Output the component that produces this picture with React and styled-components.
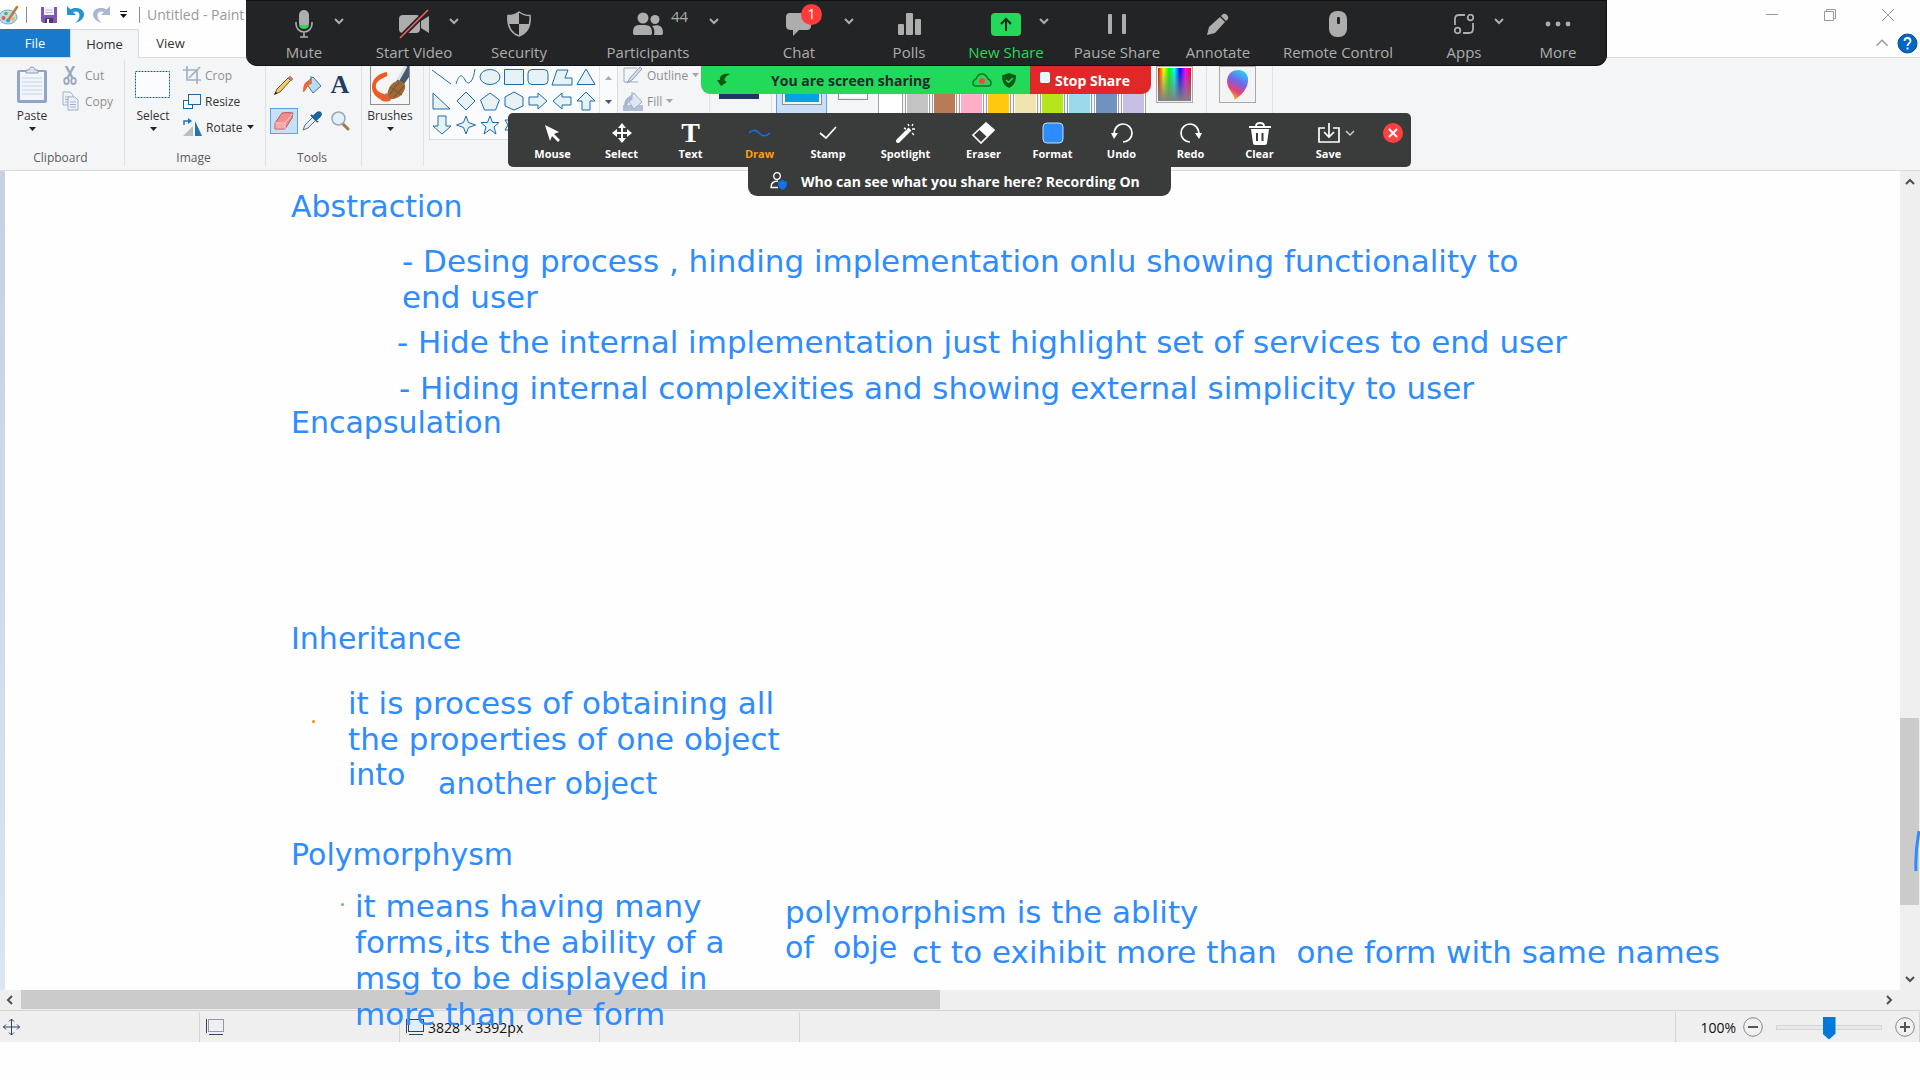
import React from "react";
import styled, { createGlobalStyle } from "styled-components";

const GlobalStyle = createGlobalStyle`
  * { box-sizing: border-box; }
  body { margin: 0; background: #fefefe; font-family: "Open Sans", "Noto Sans", sans-serif; }
  button { font-family: inherit; margin: 0; padding: 0; border: 0; background: none; color: inherit; }
  svg { display: block; flex: none; }
`;

const Desktop = styled.div`
  position: relative;
  display: flex;
  flex-direction: column;
  min-height: 100vh;
  padding-bottom: 38px;
  overflow: hidden;
  background: #fefefe;
`;

/* ---------- title bar and tabs ---------- */
const TitleBar = styled.header`
  display: flex;
  align-items: center;
  height: 29px;
  color: #999;
  font-size: 14px;
`;
const QuickButton = styled.button`
  display: flex;
  justify-content: center;
  width: ${(p) => p.$w || 26}px;
`;
const TitleRule = styled.span`
  width: 1px;
  height: 16px;
  margin-left: ${(p) => p.$gap || 0}px;
  background: #8d8d8d;
`;
const Title = styled.span`
  margin-left: 7px;
  flex: 1;
`;
const WindowButton = styled.button`
  display: flex;
  justify-content: center;
  align-items: center;
  width: 58px;
  height: 28px;
`;
const Tabs = styled.nav`
  display: flex;
  align-items: stretch;
  height: 29px;
  border-bottom: 1px solid #d9dadb;
  font-size: 13px;
  color: #333;
`;
const Tab = styled.button`
  width: ${(p) => p.$w}px;
  height: ${(p) => (p.$active ? 29 : 28)}px;
  font-size: 13px;
  color: ${(p) => (p.$file ? "#fff" : "#333")};
  background: ${(p) => (p.$file ? "#1979ca" : p.$active ? "#f4f5f7" : "none")};
  border: ${(p) => (p.$active ? "1px solid #d9dadb" : "0")};
  border-bottom: 0;
`;
const TabTools = styled.div`
  display: flex;
  align-items: center;
  gap: 8px;
  margin-left: auto;
  padding-right: 2px;
`;

/* ---------- ribbon ---------- */
const Ribbon = styled.div`
  display: flex;
  height: 113px;
  padding: 2px 0 4px;
  background: #f4f5f7;
  border-bottom: 1px solid #d9dadb;
  font-size: 12px;
  color: #333;
`;
const Group = styled.section`
  display: flex;
  flex-direction: column;
  width: ${(p) => p.$w}px;
  border-right: 1px solid #dfe1e3;
`;
const GroupBody = styled.div`
  display: flex;
  flex: 1;
  padding-left: ${(p) => p.$pad || 0}px;
  gap: ${(p) => p.$gap || 0}px;
`;
const Caption = styled.h2`
  margin: 0;
  height: 17px;
  line-height: 17px;
  padding-right: 3px;
  font-size: 12px;
  font-weight: 400;
  text-align: center;
  color: #5c5c5c;
`;
const BigButton = styled.button`
  display: flex;
  flex-direction: column;
  align-items: center;
  width: ${(p) => p.$w}px;
  padding-top: 5px;
  font-size: 12px;
  line-height: 16px;
  gap: 3px;
`;
const BigIcon = styled.span`
  display: flex;
  align-items: center;
  height: 40px;
`;
const SmallStack = styled.div`
  display: flex;
  flex-direction: column;
  padding-top: 2px;
`;
const SmallButton = styled.button`
  display: flex;
  align-items: center;
  gap: 4px;
  height: 26px;
  font-size: 12px;
  white-space: nowrap;
  color: ${(p) => (p.$off ? "#8f8f8f" : "#333")};
`;
const ToolGrid = styled.div`
  display: grid;
  grid-template-columns: repeat(3, 28px);
  grid-auto-rows: 26px;
  row-gap: 10px;
  padding-top: 12px;
`;
const ToolButton = styled.button`
  display: flex;
  align-items: center;
  justify-content: center;
  background: ${(p) => (p.$on ? "#c9dff5" : "none")};
  border: 1px solid ${(p) => (p.$on ? "#62a2e4" : "transparent")};
`;
const Gallery = styled.div`
  display: flex;
  width: 189px;
  height: 80px;
  background: #fafbfc;
  border: 1px solid #dadbdd;
`;
const ShapeGrid = styled.div`
  display: grid;
  grid-template-columns: repeat(7, 24px);
  grid-auto-rows: 24px;
  padding-top: 4px;
  width: 169px;
`;
const ShapeButton = styled.button`
  display: flex;
  align-items: center;
  justify-content: center;
`;
const GalleryScroll = styled.div`
  display: flex;
  flex: 1;
  flex-direction: column;
  align-items: center;
  gap: 20px;
  padding-top: 15px;
  border-left: 1px solid #e3e4e6;
`;
const ColorButton = styled.button`
  display: flex;
  justify-content: center;
  width: 51px;
  height: 94px;
  background: ${(p) => (p.$on ? "#c9dff5" : "none")};
  border: 1px solid ${(p) => (p.$on ? "#62a2e4" : "transparent")};
`;
const Swatch = styled.span`
  width: ${(p) => p.$s || 40}px;
  height: ${(p) => (p.$s ? 30 : 44)}px;
  margin-top: ${(p) => (p.$s ? 9 : 0)}px;
  border: 1px solid #8e8e8e;
  background: ${(p) => p.$c};
  box-shadow: inset 0 0 0 2px #f4f5f7;
`;
const Palette = styled.div`
  display: grid;
  grid-template-columns: repeat(10, 25px);
  grid-auto-rows: 25px;
  gap: 2px;
  padding-top: 4px;
`;
const PaletteCell = styled.button`
  background: ${(p) => p.$c};
  border: 1px solid ${(p) => (p.$c === "#99d9ea" ? "#62a2e4" : "#a0a0a0")};
  box-shadow: inset 0 0 0 1px #fff;
`;
const PictureButton = styled.button`
  display: flex;
  align-items: center;
  justify-content: center;
  width: 37px;
  height: 37px;
  margin-top: 6px;
  background: #f3f3f3;
  border: 1px solid #a9a9a9;
`;
const Spectrum = styled.span`
  width: 33px;
  height: 33px;
  background: linear-gradient(to bottom, transparent, #808080),
    linear-gradient(to right, #f00, #ff0, #0f0, #0ff, #00f, #f0f, #f00);
`;

/* ---------- drawing area ---------- */
const Workspace = styled.main`
  display: grid;
  flex: 1;
  grid-template-columns: 5px 1fr 20px;
  grid-template-rows: 1fr 20px;
  background: #efefef;
`;
const Edge = styled.div`
  background: linear-gradient(#c5d0e3, #dbe4f1);
`;
const Canvas = styled.div`
  background: #fefefe;
`;
const VScroll = styled.div`
  display: flex;
  flex-direction: column;
  align-items: center;
  justify-content: space-between;
  padding: 6px 0;
`;
const VTrack = styled.div`
  flex: 1;
  width: 100%;
  display: grid;
  grid-template-rows: 531fr 187fr 69fr;
`;
const VThumb = styled.div`
  grid-row: 2;
  margin-right: 1px;
  background: #cbcbcb;
`;
const HScroll = styled.div`
  grid-column: 1 / 4;
  display: flex;
  align-items: center;
  padding: 0 26px 0 5px;
`;
const HTrack = styled.div`
  flex: 1;
  height: 100%;
  margin: 0 0 0 6px;
  display: grid;
  grid-template-columns: 919fr 943fr;
`;
const HThumb = styled.div`
  margin-bottom: 1px;
  background: #cbcbcb;
`;

/* ---------- status bar ---------- */
const StatusBar = styled.footer`
  display: flex;
  height: 32px;
  padding-top: 1px;
  background: #efefef;
  border-top: 1px solid #d4d4d4;
  font-size: 14px;
  color: #111;
`;
const StatusCell = styled.div`
  display: flex;
  align-items: center;
  gap: 4px;
  width: 200px;
  padding-left: ${(p) => p.$pad || 5}px;
  border-right: 1px solid #d6d6d6;
`;
const ZoomCell = styled.div`
  display: flex;
  align-items: center;
  margin-left: auto;
  padding-right: 4px;
  padding-left: 24px;
  border-left: 1px solid #d6d6d6;
  border-right: 1px solid #d6d6d6;
  gap: 7px;
`;
const Slider = styled.input`
  appearance: none;
  width: 106px;
  height: 24px;
  margin: 0 6px;
  background: none;
  &::-webkit-slider-runnable-track {
    height: 5px;
    background: #e6eaea;
    border: 1px solid #d2d4d5;
  }
  &::-webkit-slider-thumb {
    appearance: none;
    width: 13px;
    height: 23px;
    margin-top: -9px;
    background: #0078d7;
    clip-path: polygon(0 0, 100% 0, 100% 75%, 50% 100%, 0 75%);
  }
`;

/* ---------- annotations over the desktop ---------- */
const Note = styled.p`
  position: absolute;
  left: ${(p) => p.$x}px;
  top: ${(p) => p.$y}px;
  margin: 0;
  font-family: "DejaVu Sans", sans-serif;
  font-size: ${(p) => (p.$long ? 31 : 30)}px;
  line-height: 36px;
  white-space: pre;
  color: #2d8cff;
`;
const Dot = styled.span`
  position: absolute;
  left: ${(p) => p.$x}px;
  top: ${(p) => p.$y}px;
  width: 3px;
  height: 3px;
  border-radius: 50%;
  background: ${(p) => p.$c};
`;
const PenStroke = styled.svg`
  position: absolute;
  right: 0;
  top: 828px;
`;

/* ---------- meeting toolbars ---------- */
const MeetingBar = styled.div`
  position: absolute;
  left: 246px;
  top: 0;
  display: flex;
  height: 66px;
  padding-left: 12px;
  background: #232425;
  border: 1px solid #111213;
  border-left: 0;
  border-radius: 0 0 11px 11px;
  color: #adadad;
`;
const MeetingItem = styled.button`
  position: relative;
  display: flex;
  flex-direction: column;
  align-items: center;
  width: ${(p) => p.$w}px;
  padding-top: 9px;
  font-size: 15px;
  line-height: 20px;
  white-space: nowrap;
  color: ${(p) => (p.$green ? "#23d959" : "#adadad")};
`;
const MeetingIcon = styled.span`
  display: flex;
  align-items: center;
  height: 28px;
  margin-bottom: 4px;
`;
const Drop = styled.span`
  position: absolute;
  top: 15px;
  left: calc(50% + ${(p) => p.$dx}px);
`;
const Count = styled.span`
  position: absolute;
  top: 5px;
  left: calc(50% + 23px);
`;
const Badge = styled.span`
  position: absolute;
  top: 3px;
  left: calc(50% + 2px);
  width: 21px;
  height: 21px;
  border-radius: 50%;
  background: #ff3b3b;
  color: #fff;
  font-size: 14px;
  line-height: 20px;
  text-align: center;
`;
const ShareBar = styled.div`
  position: absolute;
  left: 701px;
  top: 66px;
  display: flex;
  height: 28px;
  border-radius: 0 0 9px 9px;
  overflow: hidden;
  font-size: 14px;
  font-weight: 700;
`;
const ShareStatus = styled.div`
  display: flex;
  align-items: center;
  width: 329px;
  padding: 0 14px 0 16px;
  gap: 10px;
  background: #23d959;
  color: #222831;
`;
const ShareText = styled.span`
  flex: 1;
  padding-left: 30px;
`;
const StopButton = styled.button`
  display: flex;
  align-items: center;
  gap: 5px;
  width: 121px;
  padding-left: 10px;
  background: #e02828;
  color: #fff;
  font-size: 14px;
  font-weight: 700;
  white-space: nowrap;
`;
const StopSquare = styled.span`
  width: 10px;
  height: 11px;
  margin-bottom: 5px;
  border-radius: 2px;
  background: #e4fbff;
`;
const DrawBar = styled.div`
  position: absolute;
  left: 508px;
  top: 113px;
  display: flex;
  width: 903px;
  height: 54px;
  padding-left: 10px;
  border-radius: 5px;
  background: #3a3b3b;
`;
const DrawItem = styled.button`
  position: relative;
  display: flex;
  flex-direction: column;
  align-items: center;
  width: ${(p) => p.$w}px;
  padding-top: 8px;
  font-size: 11px;
  font-weight: 700;
  line-height: 16px;
  color: ${(p) => (p.$on ? "#ff9f0a" : "#fff")};
`;
const DrawIcon = styled.span`
  display: flex;
  align-items: center;
  height: 24px;
  margin-bottom: 1px;
`;
const CloseButton = styled.button`
  align-self: flex-start;
  margin: 10px 0 0 20px;
`;
const AudienceTab = styled.div`
  position: absolute;
  left: 748px;
  top: 166px;
  display: flex;
  align-items: center;
  gap: 14px;
  width: 423px;
  height: 30px;
  padding-left: 22px;
  border-radius: 0 0 9px 9px;
  background: #3a3b3b;
  color: #fff;
  font-size: 14px;
  font-weight: 700;
  white-space: nowrap;
`;

/* ---------- drawings ---------- */
const Caret = ({ c = "#222" }) => (
  <svg width="7" height="4" viewBox="0 0 7 4"><path d="M0 0h7L3.500 4z" fill={c} /></svg>
);
const Chevron = ({ dir = "down", c = "#505050", s = 10, w = 2 }) => {
  const d = { down: "M1 3l4 4 4-4", up: "M1 7l4-4 4 4", left: "M7 1L3 5l4 4", right: "M3 1l4 4-4 4" }[dir];
  return <svg width={s} height={s} viewBox="0 0 10 10" fill="none" stroke={c} strokeWidth={w}><path d={d} /></svg>;
};
const PaintLogo = () => (
  <svg width="21" height="20" viewBox="0 0 21 20">
    <ellipse cx="8" cy="12" rx="9" ry="7" fill="#b9dcf0" stroke="#74a9c9" />
    <circle cx="3.500" cy="13" r="2" fill="#e65b45" /><circle cx="6" cy="8.500" r="1.800" fill="#5fb04c" />
    <circle cx="8" cy="15.500" r="2" fill="#35a1d8" /><circle cx="13" cy="14" r="1.800" fill="#f2b83a" />
    <path d="M9 14L17 2" stroke="#c07c35" strokeWidth="2.600" strokeLinecap="round" />
  </svg>
);
const SaveDisk = () => (
  <svg width="16" height="16" viewBox="0 0 16 16">
    <path d="M0 0h16v16H2l-2-2z" fill="#8156b4" /><path d="M3 0h10v8H3z" fill="#f4f1f8" />
    <path d="M4.500 3h7M4.500 5.500h7" stroke="#c2b5d4" /><path d="M4 11h8v5H4z" fill="#4c3b60" /><path d="M6 12h2v4H6z" fill="#f3f3f3" />
  </svg>
);
const UNDO_PATH = "M0 0v9h9L6 6c4-1.500 6.500 0 6.500 3.500 0 3-1.500 5-4.500 7.500 6-1.500 9-5 9-9C16.500 2.500 9 .5 3.500 3.500z";
const CurvedArrow = ({ flip, c }) => (
  <svg width="17" height="18" viewBox="0 0 17 18">
    <path d={UNDO_PATH} fill={c} transform={flip ? "translate(17 0) scale(-1 1)" : undefined} />
  </svg>
);
const PasteIcon = () => (
  <svg width="32" height="38" viewBox="0 0 32 38">
    <rect x="1" y="4" width="30" height="33" rx="2" fill="#91a5c8" />
    <rect x="4" y="6" width="24" height="28" fill="#f2f6fc" />
    <path d="M6 12h20M6 16h20M6 20h20M6 24h20M6 28h20" stroke="#c3d0e4" />
    <path d="M10 7V4h3c0-4 6-4 6 0h3v3z" fill="#dbe3ef" stroke="#8c9cb8" />
  </svg>
);
const CutIcon = () => (
  <svg width="14" height="19" viewBox="0 0 14 19" fill="none" stroke="#9aa8c2">
    <path d="M3 0l6.500 12M11 0L4.500 12" strokeWidth="2.400" /><ellipse cx="3.500" cy="15" rx="2.300" ry="3" strokeWidth="1.800" /><ellipse cx="10.500" cy="15" rx="2.300" ry="3" strokeWidth="1.800" />
  </svg>
);
const CopyIcon = () => (
  <svg width="17" height="20" viewBox="0 0 17 20" fill="#eef2f9" stroke="#9fb0cd">
    <path d="M1 1h7l3 3v10H1z" /><path d="M3 6h5M3 8.500h5M3 11h5" />
    <path d="M6 6h7l3 3v10H6z" /><path d="M8 11h6M8 13.500h6M8 16h6" />
  </svg>
);
const SelectIcon = () => (
  <svg width="36" height="28" viewBox="0 0 36 28"><rect x=".5" y=".5" width="34" height="26" fill="#fafcfe" stroke="#1463a5" strokeDasharray="2 1" /></svg>
);
const CropIcon = () => (
  <svg width="18" height="18" viewBox="0 0 18 18" fill="none" stroke="#a3afc4" strokeWidth="1.700">
    <path d="M4 0v14h14M0 4h14v14M6 12L17 1" />
  </svg>
);
const ResizeIcon = () => (
  <svg width="18" height="17" viewBox="0 0 18 17" fill="#fff" stroke="#1b67a6">
    <rect x=".5" y="7.500" width="9" height="8" /><rect x="5.500" y="1.500" width="12" height="10" fill="#eef8fb" />
  </svg>
);
const RotateIcon = () => (
  <svg width="19" height="19" viewBox="0 0 19 19">
    <path d="M0 18h10V8z" fill="#bdbdbd" /><path d="M12 18h7L12 3z" fill="#2275b5" />
    <path d="M1 7V3h5" fill="none" stroke="#1e74c8" strokeWidth="1.500" /><path d="M5 0l4 3-4 3z" fill="#1e74c8" />
  </svg>
);
const PencilTool = () => (
  <svg width="20" height="20" viewBox="0 0 20 20">
    <path d="M1 19l2-5L14 3l2.500 2.500L6 17z" fill="#f1cc6d" stroke="#6b5530" /><path d="M14 3l2-2 3 3-2 2z" fill="#d9747c" stroke="#7c6a55" strokeWidth=".6" /><path d="M0 20l1.500-3.500L3.500 18.500z" fill="#222" />
  </svg>
);
const FillTool = ({ grey }) => (
  <svg width="20" height="19" viewBox="0 0 20 19">
    {grey && <path d="M0 13h20v6H0z" fill="#b0bfd7" />}
    <path d="M4 7L11 1l8 9-8 7z" fill={grey ? "#dfe6f1" : "#b9dcf2"} stroke={grey ? "#9fadc6" : "#44718f"} />
    <path d="M9 0v8" stroke={grey ? "#9fadc6" : "#54677a"} /><path d="M9 4C3 5 1 8 1 16c3 0 3-6 8-8z" fill={grey ? "#a8b7d0" : "#ec6a32"} />
  </svg>
);
const LetterA = styled.span`
  font-family: "Liberation Serif", serif;
  font-size: 26px;
  font-weight: 700;
  line-height: 24px;
  color: #1f3b66;
`;
const EraserTool = () => (
  <svg width="20" height="18" viewBox="0 0 20 18"><path d="M1 11L8 1q5-1 11 0l-1 5-7 11H1z" fill="#f08e8e" stroke="#b5585b" /><path d="M1.500 11.500h9.500v5H1.500z" fill="#f7a9a5" /><path d="M1 11h10v6M11 11l7.500-9" fill="none" stroke="#f9d3d0" /></svg>
);
const Dropper = () => (
  <svg width="20" height="20" viewBox="0 0 20 20"><path d="M1 19l2-5 8-8 3 3-8 8z" fill="#e2edf4" stroke="#5e7180" /><path d="M9 4l7 7M11 6l4-4c3-2 5 1 3 3l-4 4z" stroke="#1c5d9c" strokeWidth="2" fill="#1c6cb1" /></svg>
);
const Magnifier = () => (
  <svg width="19" height="20" viewBox="0 0 19 20"><path d="M11 12l6 6" stroke="#a77843" strokeWidth="3" strokeLinecap="round" /><circle cx="7.500" cy="7.500" r="6.500" fill="#e1f1fb" stroke="#9ba8b2" strokeWidth="1.500" /></svg>
);
const BrushPicture = () => (
  <svg width="40" height="40" viewBox="0 0 40 40">
    <rect x=".5" y=".5" width="39" height="39" fill="#f4f5f5" stroke="#8b9094" />
    <path d="M16 7C8 9 2 14 2 22c0 6 4 11 12 14l3-6C9 28 5 25 6 20c1-5 6-6 11-9 1-2 0-4-1-4z" fill="#ee5a24" />
    <path d="M26 17L35 1h4v11l-7 10z" fill="#45586d" /><path d="M28 15l8-14" stroke="#dbe3e9" strokeWidth="3" />
    <path d="M17 31c1-9 5-14 11-15 6 0 9 4 6 10-3 6-9 9-17 8z" fill="#9a6a3a" /><path d="M20 29l9-12M24 32l10-11M20 22l12 8" stroke="#7b4f24" /><path d="M11 35c3-2 3-6 6-7l4 7c-3 2-7 2-10 0z" fill="#e06030" />
  </svg>
);
const SHAPES = [
  ["line", "M2 3l19 14"], ["curve", "M2 17c3-10 6-10 9-4s8 3 10-11"],
  ["oval", "M2 10a10 7.500 0 1 0 20 0a10 7.500 0 1 0-20 0z"], ["rectangle", "M2.500 2.500h19v15h-19z"],
  ["rounded rectangle", "M6 2.500h12q4 0 4 4v7q0 4-4 4H6q-4 0-4-4v-7q0-4 4-4z"],
  ["polygon", "M7 3h11l-3 8h7v7H2z"], ["triangle", "M12 2l9 15.500H3z"],
  ["right triangle", "M3 2v16h17z"], ["diamond", "M12 1l9 9-9 9-9-9z"], ["pentagon", "M12 2l9.500 7-4 10h-11l-4-10z"],
  ["hexagon", "M12 1l9 5v9l-9 4-9-4V6z"], ["right arrow", "M3 6h9V2l9 8-9 8v-4H3z"], ["left arrow", "M21 6h-9V2l-9 8 9 8v-4h9z"],
  ["up arrow", "M12 1l9 9h-5v9H8v-9H3z"], ["down arrow", "M12 19l9-8h-5V1H8v10H3z"],
  ["four-point star", "M12 1l2.500 6.500 7 2.500-7 2.500L12 19l-2.500-6.500-7-2.500 7-2.500z"],
  ["five-point star", "M12 1l2.500 6.500H21l-5 4.500 2 7-6-4.500L6 19l2-7-5-4.500h6.500z"],
  ["six-point star", "M12 1l3 4h6l-3 5 3 5h-6l-3 4-3-4H3l3-5-3-5h6z"],
];
const Shape = ({ d, open }) => (
  <svg width="24" height="20" viewBox="0 0 24 20" fill={open ? "none" : "#e6f2f6"} stroke="#1e6bab"><path d={d} /></svg>
);
const OutlineIcon = () => (
  <svg width="20" height="18" viewBox="0 0 20 18"><path d="M14 2H1v14h14" fill="none" stroke="#9cabc6" /><path d="M4 17l3-5L17 1l2 2L9 14z" fill="#d5deeb" stroke="#8b9cb9" /></svg>
);
const Paint3D = () => (
  <svg width="24" height="32" viewBox="0 0 24 32">
    <defs><linearGradient id="drop" x1=".7" y1="0" x2=".3" y2="1"><stop offset="0" stopColor="#25d3f3" /><stop offset=".4" stopColor="#7265e8" /><stop offset=".7" stopColor="#e8407a" /><stop offset="1" stopColor="#ffc400" /></linearGradient></defs>
    <path d="M12 1c7 0 11 5 10 12-1 7-7 14-14 18 2-5-6-9-7-18C1 6 5 1 12 1z" fill="url(#drop)" />
  </svg>
);
const MoveIcon = () => (
  <svg width="17" height="18" viewBox="0 0 17 18" fill="none" stroke="#284468"><path d="M8.500 1v16M0 9h17M6 3.500L8.500 1 11 3.500M6 14.500L8.500 17l2.500-2.500M3 6.500L.500 9 3 11.500M14 6.500L16.500 9 14 11.500" /></svg>
);
const BoxIcon = ({ solid }) => (
  <svg width="19" height="18" viewBox="0 0 19 18" stroke="#284468"><rect x="3.500" y="1.500" width="15" height="12" fill={solid ? "#dff0f7" : "none"} strokeDasharray={solid ? undefined : "1 1"} /><path d="M1.500 1v14M4 16.500h14" /></svg>
);
const ZoomKnob = ({ plus }) => (
  <svg width="20" height="20" viewBox="0 0 20 20" stroke="#555"><circle cx="10" cy="10" r="9.300" fill="#f1f1f1" stroke="#858585" /><path d={plus ? "M5 10h10M10 5v10" : "M5 10h10"} strokeWidth="2" /></svg>
);
const MicIcon = () => (
  <svg width="18" height="28" viewBox="0 0 18 28" fill="none" stroke="#adadad" strokeWidth="1.600">
    <rect x="4" y="0" width="10" height="18" rx="5" fill="#adadad" stroke="none" /><path d="M4 15h10a5 4 0 0 1-10 0z" fill="#23d959" stroke="none" />
    <path d="M1 12v2a8 8 0 0 0 16 0v-2M9 22v5M5 27h8" />
  </svg>
);
const VideoOffIcon = () => (
  <svg width="31" height="30" viewBox="0 0 31 30"><rect x="0" y="6" width="21" height="18" rx="4" fill="#adadad" /><path d="M22 12l8-5v17l-8-5z" fill="#adadad" /><path d="M1 29L29 1" stroke="#232425" strokeWidth="5" /><path d="M1 29L29 1" stroke="#ff5d5d" strokeWidth="1.600" /></svg>
);
const SecurityIcon = () => (
  <svg width="24" height="26" viewBox="0 0 24 26"><path d="M12 1c4 3 7 3.500 11 3.500C24 15 20 22 12 25 4 22 0 15 1 4.500 5 4.500 8 4 12 1z" fill="#232425" stroke="#adadad" strokeWidth="1.500" /><path d="M12 1v12H1.500C1 10 1 7 1 4.500 5 4.500 8 4 12 1zM12 13h10.500c-1 5-4 9.500-10.500 12z" fill="#adadad" /></svg>
);
const PeopleIcon = () => (
  <svg width="31" height="24" viewBox="0 0 31 24" fill="#adadad"><circle cx="10" cy="6" r="5.500" /><circle cx="22" cy="7.500" r="4.500" /><path d="M0 21c0-9 5-8 10-8s9 0 9 8c0 1.500-1 2-2 2H2c-1 0-2-.5-2-2zM19 14c6-1.500 11-1 11 7 0 1.500-1 2-2 2h-7c1-4 0-7-2-9z" /></svg>
);
const ChatIcon = () => (
  <svg width="26" height="24" viewBox="0 0 26 24" fill="#adadad"><path d="M4 1h17q4 0 4 4v9q0 4-4 4h-8l-6 6v-6H5q-5 0-5-4V5q0-4 4-4z" /></svg>
);
const PollsIcon = () => (
  <svg width="23" height="24" viewBox="0 0 23 24" fill="#adadad"><rect y="12" width="6" height="11" rx="1" /><rect x="8" y="1" width="7" height="22" rx="1" /><rect x="17" y="7" width="6" height="16" rx="1" /></svg>
);
const ShareIcon = () => (
  <svg width="30" height="23" viewBox="0 0 30 23"><rect width="30" height="23" rx="4" fill="#23d959" /><path d="M15 18V6M10 11l5-5 5 5" fill="none" stroke="#232425" strokeWidth="2" /></svg>
);
const PauseIcon = () => (
  <svg width="18" height="20" viewBox="0 0 18 20" fill="#adadad"><rect width="4" height="20" rx="1" /><rect x="14" width="4" height="20" rx="1" /></svg>
);
const AnnotateIcon = () => (
  <svg width="22" height="22" viewBox="0 0 22 22" fill="#adadad"><path d="M0 22l2-8L13 4l5 5L8 20zM14 3l2-2q2-1 4 1t1 4l-2 2z" /></svg>
);
const MouseIcon = () => (
  <svg width="18" height="26" viewBox="0 0 18 26"><rect width="18" height="26" rx="8" fill="#adadad" /><rect x="8" y="6" width="3" height="7" rx="1" fill="#232425" /></svg>
);
const AppsIcon = () => (
  <svg width="20" height="20" viewBox="0 0 20 20" fill="none" stroke="#adadad" strokeWidth="1.800"><path d="M11 1H5Q1 1 1 5v6M9 19h6q4 0 4-4V9" /><circle cx="16.500" cy="3.500" r="2.800" /><circle cx="3.500" cy="16.500" r="2.800" /></svg>
);
const DotsIcon = () => (
  <svg width="26" height="6" viewBox="0 0 26 6" fill="#adadad"><circle cx="3" cy="3" r="2.400" /><circle cx="13" cy="3" r="2.400" /><circle cx="23" cy="3" r="2.400" /></svg>
);
const white = { fill: "none", stroke: "#fff", strokeWidth: 2 };
const DRAW_ICONS = {
  Mouse: <svg width="16" height="17" viewBox="0 0 16 17" fill="#fff"><path d="M0 0l14 7-5 2 6 6-2 2-6-6-2 5z" /></svg>,
  Select: <svg width="20" height="20" viewBox="0 0 20 20"><path d="M10 3v14M3 10h14" stroke="#fff" strokeWidth="2" /><path d="M10 0l4 5H6zM10 20l4-5H6zM0 10l5-4v8zM20 10l-5-4v8z" fill="#fff" /></svg>,
  Draw: <svg width="23" height="10" viewBox="0 0 23 10" fill="none" stroke="#0e72ed" strokeWidth="1.600"><path d="M1 5c4-4 7-3 10 0s7 4 11 0" /></svg>,
  Stamp: <svg width="18" height="14" viewBox="0 0 18 14" {...white} strokeWidth="1.700"><path d="M1 7l6 5L17 1" /></svg>,
  Spotlight: <svg width="20" height="20" viewBox="0 0 20 20" {...white}><path d="M2 18L11 9" strokeWidth="4" strokeLinecap="round" /><path d="M12 8l2-2" strokeWidth="4" /><path d="M8 5l2 1M12 1l1 2M17 1l-1 2M19 6h-2M18 12l-2-2M16 6l1 0" strokeWidth="1.400" /></svg>,
  Eraser: <svg width="23" height="22" viewBox="0 0 23 22"><path d="M1 13L14 1l8 7L9 21z" fill="#3a3b3b" stroke="#fff" strokeWidth="1.600" /><path d="M7 7.500L14 1l8 7-7 7z" fill="#fff" /></svg>,
  Format: <svg width="22" height="22" viewBox="0 0 22 22"><rect x="1" y="1" width="20" height="20" rx="4" fill="#2d8cff" stroke="#c5dcf5" /></svg>,
  Undo: <svg width="22" height="20" viewBox="0 0 22 20"><path d="M3 12C3 5 7 1 12 1s9 4 9 9-4 9-9 9" fill="none" stroke="#fff" strokeWidth="1.700" /><path d="M0 10h7l-4 6z" fill="#fff" /></svg>,
  Redo: <svg width="22" height="20" viewBox="0 0 22 20"><path d="M19 12c0-7-4-11-9-11s-9 4-9 9 4 9 9 9" fill="none" stroke="#fff" strokeWidth="1.700" /><path d="M22 10h-7l4 6z" fill="#fff" /></svg>,
  Clear: <svg width="22" height="23" viewBox="0 0 22 23"><path d="M0 5h22M7 4q0-3 4-3t4 3" fill="none" stroke="#fff" strokeWidth="1.800" /><path d="M2 7h18l-2 14q0 2-2 2H6q-2 0-2-2z" fill="#fff" /><path d="M8 11v8M13.500 11v8" stroke="#3a3b3b" strokeWidth="2" /></svg>,
  Save: <svg width="22" height="20" viewBox="0 0 22 20" {...white} strokeWidth="1.700"><path d="M7 5H1v14h20V5h-6M11 0v14M6 9l5 5 5-5" /></svg>,
};
const LetterT = styled.span`
  font-family: "Liberation Serif", serif;
  font-size: 28px;
  font-weight: 700;
`;

const MEETING = [
  ["Mute", 92, <MicIcon />, 30], ["Start Video", 128, <VideoOffIcon />, 35], ["Security", 82, <SecurityIcon />],
  ["Participants", 176, <PeopleIcon />, 61], ["Chat", 126, <ChatIcon />, 45], ["Polls", 94, <PollsIcon />],
  ["New Share", 100, <ShareIcon />, 33], ["Pause Share", 122, <PauseIcon />], ["Annotate", 80, <AnnotateIcon />],
  ["Remote Control", 160, <MouseIcon />], ["Apps", 92, <AppsIcon />, 30], ["More", 96, <DotsIcon />],
];
const DRAW = [
  ["Mouse", 69], ["Select", 69], ["Text", 69], ["Draw", 69], ["Stamp", 68], ["Spotlight", 87],
  ["Eraser", 69], ["Format", 69], ["Undo", 69], ["Redo", 69], ["Clear", 69], ["Save", 69],
];
const PALETTE = [
  "#000", "#7f7f7f", "#880015", "#ed1c24", "#ff7f27", "#fff200", "#22b14c", "#00a2e8", "#3f48cc", "#a349a4",
  "#fff", "#c3c3c3", "#b97a57", "#ffaec9", "#ffc90e", "#efe4b0", "#b5e61d", "#99d9ea", "#7092be", "#c8bfe7",
  "#f8f8f8", "#f8f8f8", "#f8f8f8", "#f8f8f8", "#f8f8f8", "#f8f8f8", "#f8f8f8", "#f8f8f8", "#f8f8f8", "#f8f8f8",
];
const HEADINGS = [
  [291, 189, "Abstraction"],
  [291, 405, "Encapsulation"],
  [291, 621, "Inheritance"],
  [291, 837, "Polymorphysm"],
  [348, 757, "into"],
  [438, 766, "another object"],
  [785, 930, "of  obje"],
];
const SENTENCES = [
  [402, 243, "- Desing process , hinding implementation onlu showing functionality to\nend user"],
  [397, 324, "- Hide the internal implementation just highlight set of services to end user"],
  [399, 370, "- Hiding internal complexities and showing external simplicity to user"],
  [348, 685, "it is process of obtaining all\nthe properties of one object"],
  [355, 888, "it means having many\nforms,its the ability of a\nmsg to be displayed in\nmore than one form"],
  [785, 894, "polymorphism is the ablity"],
  [912, 934, "ct to exihibit more than  one form with same names"],
];

export default function App() {
  return (
    <Desktop>
      <GlobalStyle />
      <TitleBar>
        <PaintLogo />
        <QuickButton as="span" $w={10}><TitleRule /></QuickButton>
        <QuickButton $w={36} aria-label="Save"><SaveDisk /></QuickButton>
        <QuickButton $w={16} aria-label="Undo"><CurvedArrow c="#2792d3" /></QuickButton>
        <QuickButton $w={36} aria-label="Redo"><CurvedArrow flip c="#a9b8d0" /></QuickButton>
        <QuickButton $w={8} aria-label="Customize">
          <svg width="7" height="7" viewBox="0 0 7 7"><path d="M0 .5h7" stroke="#111" /><path d="M0 3h7L3.500 7z" fill="#111" /></svg>
        </QuickButton>
        <TitleRule $gap={12} />
        <Title>Untitled - Paint</Title>
        <WindowButton aria-label="Minimize"><svg width="12" height="12" viewBox="0 0 12 12" stroke="#999"><path d="M0 5.500h12" /></svg></WindowButton>
        <WindowButton aria-label="Restore"><svg width="12" height="12" viewBox="0 0 12 12" fill="none" stroke="#999"><path d="M.5 2.500h9v9h-9zM2.500 2V.5h9v9H10" /></svg></WindowButton>
        <WindowButton aria-label="Close"><svg width="12" height="12" viewBox="0 0 12 12" stroke="#999"><path d="M0 0l12 12M12 0L0 12" /></svg></WindowButton>
        <QuickButton as="span" $w={3} />
      </TitleBar>
      <Tabs>
        <Tab $w={70} $file>File</Tab>
        <Tab $w={69} $active>Home</Tab>
        <Tab $w={63}>View</Tab>
        <TabTools>
          <button aria-label="Collapse ribbon"><Chevron dir="up" c="#999" s={14} w={1} /></button>
          <button aria-label="Help">
            <svg width="21" height="21" viewBox="0 0 21 21"><circle cx="10.500" cy="10.500" r="9.500" fill="#0067c5" stroke="#0a4d8c" /><path d="M7.500 8c0-4 6-4 6 0 0 2-3 2.500-3 5M10.500 14.500v2" fill="none" stroke="#fff" strokeWidth="1.800" /></svg>
          </button>
        </TabTools>
      </Tabs>
      <Ribbon>
        <Group $w={125}>
          <GroupBody $pad={8} $gap={3}>
            <BigButton $w={48}><BigIcon><PasteIcon /></BigIcon>Paste<Caret /></BigButton>
            <SmallStack>
              <SmallButton $off><QuickButton as="span" $w={22}><CutIcon /></QuickButton>Cut</SmallButton>
              <SmallButton $off><QuickButton as="span" $w={22}><CopyIcon /></QuickButton>Copy</SmallButton>
            </SmallStack>
          </GroupBody>
          <Caption>Clipboard</Caption>
        </Group>
        <Group $w={141}>
          <GroupBody $pad={3} $gap={5}>
            <BigButton $w={50}><BigIcon><SelectIcon /></BigIcon>Select<Caret /></BigButton>
            <SmallStack>
              <SmallButton $off><CropIcon />Crop</SmallButton>
              <SmallButton><ResizeIcon />Resize</SmallButton>
              <SmallButton><RotateIcon />Rotate<Caret /></SmallButton>
            </SmallStack>
          </GroupBody>
          <Caption>Image</Caption>
        </Group>
        <Group $w={96}>
          <GroupBody $pad={4}>
            <ToolGrid>
              <ToolButton aria-label="Pencil"><PencilTool /></ToolButton>
              <ToolButton aria-label="Fill with color"><FillTool /></ToolButton>
              <ToolButton><LetterA>A</LetterA></ToolButton>
              <ToolButton $on aria-label="Eraser"><EraserTool /></ToolButton>
              <ToolButton aria-label="Color picker"><Dropper /></ToolButton>
              <ToolButton aria-label="Magnifier"><Magnifier /></ToolButton>
            </ToolGrid>
          </GroupBody>
          <Caption>Tools</Caption>
        </Group>
        <Group $w={62}>
          <GroupBody $pad={2}>
            <BigButton $w={52}><BigIcon><BrushPicture /></BigIcon>Brushes<Caret /></BigButton>
          </GroupBody>
        </Group>
        <Group $w={286}>
          <GroupBody $pad={5} $gap={5}>
            <Gallery>
              <ShapeGrid>
                {SHAPES.map(([name, d], i) => (
                  <ShapeButton key={name} aria-label={name}><Shape d={d} open={i < 2} /></ShapeButton>
                ))}
              </ShapeGrid>
              <GalleryScroll>
                <svg width="7" height="4" viewBox="0 0 7 4"><path d="M0 4h7L3.500 0z" fill="#a9adb3" /></svg>
                <Caret c="#3d5878" />
              </GalleryScroll>
            </Gallery>
            <SmallStack>
              <SmallButton $off><OutlineIcon />Outline<Caret c="#a5a5a5" /></SmallButton>
              <SmallButton $off><FillTool grey />Fill<Caret c="#a5a5a5" /></SmallButton>
            </SmallStack>
          </GroupBody>
        </Group>
        <Group $w={62}>
          <GroupBody $pad={8}>
            <svg width="42" height="44" viewBox="0 0 42 44"><path d="M1 8h40M1 16h40M1 26h40" stroke="#1f3763" strokeWidth="3" /><path d="M1 33h40v6H1z" fill="#1f3763" /></svg>
          </GroupBody>
        </Group>
        <Group $w={435}>
          <GroupBody $pad={4}>
            <ColorButton $on aria-label="Color 1"><Swatch $c="#00a2e8" /></ColorButton>
            <ColorButton aria-label="Color 2"><Swatch $s={30} $c="#fff" /></ColorButton>
            <Palette>
              {PALETTE.map((c, i) => <PaletteCell key={i} $c={c} aria-label={"Color " + c} />)}
            </Palette>
            <QuickButton as="span" $w={10} />
            <PictureButton aria-label="Edit colors"><Spectrum /></PictureButton>
          </GroupBody>
        </Group>
        <Group $w={66}>
          <GroupBody $pad={12}>
            <PictureButton aria-label="Edit with Paint 3D"><Paint3D /></PictureButton>
          </GroupBody>
        </Group>
      </Ribbon>
      <Workspace>
        <Edge />
        <Canvas />
        <VScroll>
          <Chevron dir="up" />
          <VTrack><VThumb /></VTrack>
          <Chevron dir="down" />
        </VScroll>
        <HScroll>
          <Chevron dir="left" />
          <HTrack><HThumb /></HTrack>
          <Chevron dir="right" />
        </HScroll>
      </Workspace>
      <StatusBar>
        <StatusCell $pad={3}><MoveIcon /></StatusCell>
        <StatusCell><BoxIcon /></StatusCell>
        <StatusCell><BoxIcon solid />3828 × 3392px</StatusCell>
        <StatusCell />
        <ZoomCell>
          <label htmlFor="zoom">100%</label>
          <button aria-label="Zoom out"><ZoomKnob /></button>
          <Slider id="zoom" type="range" min="0" max="100" defaultValue="50" />
          <button aria-label="Zoom in"><ZoomKnob plus /></button>
        </ZoomCell>
      </StatusBar>

      {HEADINGS.map(([x, y, text]) => <Note key={y} $x={x} $y={y}>{text}</Note>)}
      {SENTENCES.map(([x, y, text]) => <Note key={y} $x={x} $y={y} $long>{text}</Note>)}
      <Dot $x={312} $y={720} $c="#ff8c00" />
      <Dot $x={341} $y={903} $c="#6dbb74" />
      <PenStroke width="6" height="44" viewBox="0 0 6 44" fill="none" stroke="#2d8cff" strokeWidth="3"><path d="M5 3C3 14 1 24 2 43" /></PenStroke>

      <AudienceTab>
        <svg width="17" height="18" viewBox="0 0 17 18" fill="none" stroke="#fff" strokeWidth="1.300">
          <circle cx="7" cy="4" r="3.300" /><path d="M8 9C3 9 1 11 1 15.500h7" /><path d="M12.500 8l4.500 2c0 4-1 6-4.500 8C9 16 8 14 8 10z" fill="#0e72ed" stroke="none" />
        </svg>
        Who can see what you share here? Recording On
      </AudienceTab>
      <DrawBar>
        {DRAW.map(([name, w]) => (
          <DrawItem key={name} $w={w} $on={name === "Draw"}>
            <DrawIcon>{name === "Text" ? <LetterT aria-hidden="true">T</LetterT> : DRAW_ICONS[name]}</DrawIcon>
            {name}
            {name === "Save" && <Drop $dx={16}><Chevron c="#ccc" w={1.5} /></Drop>}
          </DrawItem>
        ))}
        <CloseButton aria-label="Close annotation tools">
          <svg width="20" height="20" viewBox="0 0 20 20"><circle cx="10" cy="10" r="10" fill="#ff4040" /><path d="M6 6l8 8M14 6l-8 8" stroke="#fff" strokeWidth="2" /></svg>
        </CloseButton>
      </DrawBar>
      <ShareBar>
        <ShareStatus>
          <svg width="14" height="14" viewBox="0 0 14 14"><path d="M13 1C6 0 2 3 3 7H0l4 6 6-4-2-1c-1-3 1-5 5-7z" fill="#0d5a12" /></svg>
          <ShareText>You are screen sharing</ShareText>
          <svg width="20" height="14" viewBox="0 0 20 14"><path d="M4 13q-3 0-3-3t3-4q2-5 6-5t6 5q3 1 3 4t-3 3z" fill="none" stroke="#14772c" strokeWidth="1.500" /><circle cx="10" cy="8" r="3" fill="#ff4040" /></svg>
          <svg width="14" height="15" viewBox="0 0 14 15"><path d="M7 0l7 2.500C14 9 12 12.500 7 15 2 12.500 0 9 0 2.500z" fill="#0d5a12" /><path d="M4 7l2.500 2.500L11 5" fill="none" stroke="#23d959" strokeWidth="1.500" /></svg>
        </ShareStatus>
        <StopButton><StopSquare />Stop Share</StopButton>
      </ShareBar>
      <MeetingBar>
        {MEETING.map(([name, w, icon, drop]) => (
          <MeetingItem key={name} $w={w} $green={name === "New Share"}>
            <MeetingIcon>{icon}</MeetingIcon>
            {name}
            {name === "Participants" && <Count>44</Count>}
            {name === "Chat" && <Badge>1</Badge>}
            {drop && <Drop $dx={drop}><Chevron c="#adadad" /></Drop>}
          </MeetingItem>
        ))}
      </MeetingBar>
    </Desktop>
  );
}
